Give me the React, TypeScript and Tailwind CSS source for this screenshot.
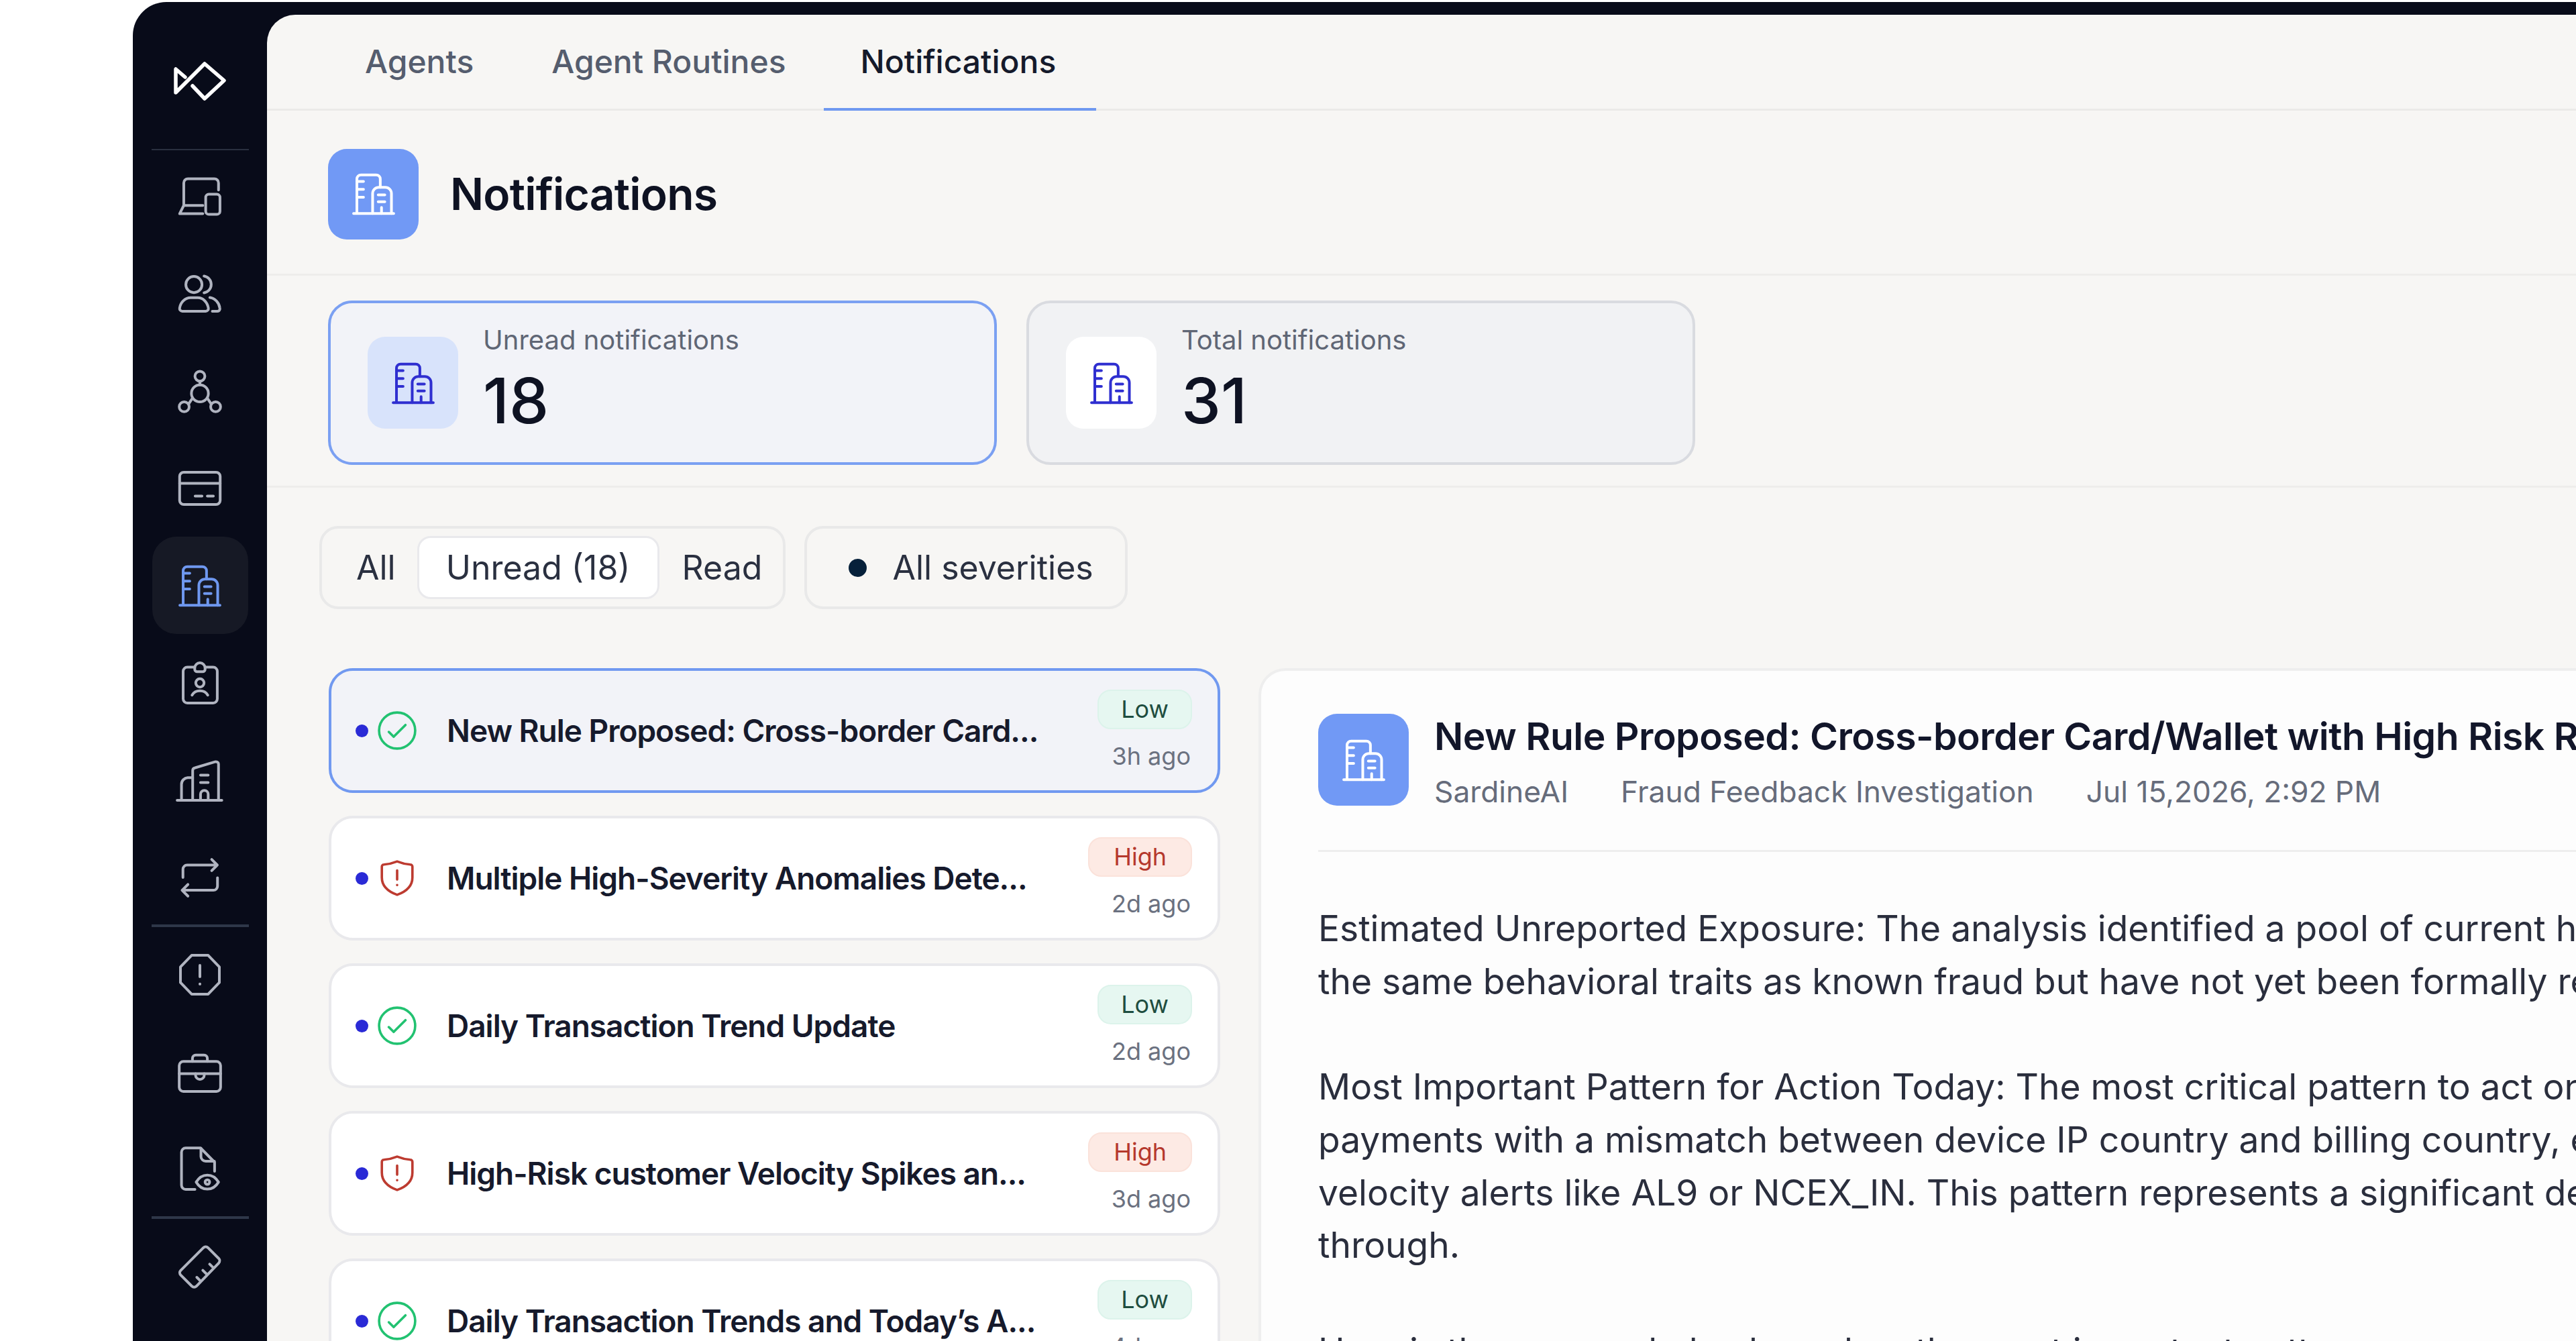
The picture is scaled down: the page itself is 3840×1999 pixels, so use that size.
import React from "react";

type IconProps = { className?: string };

const Svg = ({ className = "", children }: IconProps & { children: React.ReactNode }) => (
  <svg
    viewBox="0 0 24 24"
    fill="none"
    stroke="currentColor"
    strokeWidth={1.3}
    strokeLinecap="round"
    strokeLinejoin="round"
    className={`h-[74px] w-[74px] shrink-0 ${className}`}
  >
    {children}
  </svg>
);

const Logo = () => (
  <svg viewBox="40 30 82 62" fill="none" stroke="#fff" strokeWidth={5.5} strokeLinejoin="round" strokeLinecap="round" className="h-[62px] w-[82px]">
    <path d="M59 55 45 43v35l43-43 29 25-29 27-18-19" />
  </svg>
);

const LaptopIcon = (p: IconProps) => (
  <Svg {...p}>
    <path d="M21 8.8V5.4a2 2 0 0 0-2-2H6.2a2 2 0 0 0-2 2v10.9l-2 4h11.2M4.2 16.300h9.2" />
    <rect x="14.8" y="10.9" width="6.9" height="9.7" rx="1.5" />
  </Svg>
);

const UsersIcon = (p: IconProps) => (
  <Svg {...p}>
    <circle cx="9.1" cy="7.5" r="3.9" />
    <path d="M3.5 20.4h11.3a1.3 1.3 0 0 0 1.3-1.5c-.5-2.9-2.6-5-5.1-5H7.5c-2.6 0-4.9 2.1-5.3 5a1.3 1.3 0 0 0 1.3 1.5Z" />
    <path d="M14 3.4a4.1 4.1 0 0 1 0 8.1M16.8 13.8c2.6.4 4.5 2.5 4.8 5a1.2 1.2 0 0 1-1.2 1.6H18" />
  </Svg>
);

const NetworkIcon = (p: IconProps) => (
  <Svg {...p}>
    <circle cx="12" cy="13.1" r="4.1" />
    <circle cx="12" cy="4.8" r="2.4" />
    <circle cx="4.4" cy="19.6" r="2.4" />
    <circle cx="19.6" cy="19.6" r="2.4" />
    <path d="M12 7.2V9M6.5 18.3l2-3M15.500 15.3l2 3" />
  </Svg>
);

const CardIcon = (p: IconProps) => (
  <Svg {...p}>
    <rect x="2.2" y="4.2" width="19.6" height="15.6" rx="2" />
    <path d="M2.2 9.6h19.6M9.7 15.7H13M15.6 15.7h2.9" />
  </Svg>
);

const BuildingsIcon = (p: IconProps) => (
  <Svg {...p}>
    <path d="M2.3 21.5h19.4M3.9 21.5V4.8a2 2 0 0 1 2-2h7.3a2 2 0 0 1 2 2v4" />
    <path d="M11.5 21.5v-9.7a3 3 0 0 1 3-3h3.1a3 3 0 0 1 3 3v9.7" />
    <path d="M3.9 6h3.2M3.9 9.8h3.2M3.9 13.6h3.2M14.2 12.5h3.2M14.2 15.8h3.2M15.8 18.6v2.9" />
  </Svg>
);

const BadgeIcon = (p: IconProps) => (
  <Svg {...p}>
    <path d="M9.5 4.4H5.9a2 2 0 0 0-2 2v13.3a2 2 0 0 0 2 2h12.5a2 2 0 0 0 2-2V6.4a2 2 0 0 0-2-2h-3.9" />
    <path d="M9.5 4.8a2.5 2.5 0 0 1 5 0v.6a1.2 1.2 0 0 1-1.2 1.2h-2.6a1.2 1.2 0 0 1-1.2-1.2Z" />
    <circle cx="12" cy="12" r="2" />
    <path d="M8.2 17.9c.8-1.4 2.2-2.1 3.8-2.1s3 .7 3.8 2.1" />
  </Svg>
);

const OfficeIcon = (p: IconProps) => (
  <Svg {...p}>
    <path d="M1 21.7h21.6M8.5 21.7V7.4c0-.7.5-1.3 1.2-1.4l9.6-2.9c.7-.2 1.7.3 1.7 1v17.6" />
    <path d="M3.1 21.7V14c0-1.8 1.4-3.1 3-3.2h2.4M12.3 21.7v-2.9a1.85 1.85 0 0 1 3.7 0v2.900M12.3 9.6H16M12.3 13.1H16" />
  </Svg>
);

const SwapIcon = (p: IconProps) => (
  <Svg {...p}>
    <path d="M3.8 12V8a2 2 0 0 1 2-2h14.6M17.7 3.3 20.4 6l-2.7 2.7M20.5 12.2v4a2 2 0 0 1-2 2H3.4M6.2 15.4l-2.8 2.8L6.2 21" />
  </Svg>
);

const OctagonIcon = (p: IconProps) => (
  <Svg {...p}>
    <path d="M8 2.6h8L21.400 8.200v7.600L16 21.400H8L2.600 15.800V8.200Z" />
    <path d="M12 7.5V13M12 16.5h.01" />
  </Svg>
);

const BriefcaseIcon = (p: IconProps) => (
  <Svg {...p}>
    <rect x="2" y="6.9" width="20" height="14.5" rx="2" />
    <path d="M8.4 6.9V5.4a1.6 1.6 0 0 1 1.6-1.6h4a1.6 1.6 0 0 1 1.6 1.6v1.5M2 12.8h7.9M14.1 12.8H22" />
    <path d="M9.9 12.8v.7a2.1 2.1 0 0 0 4.2 0v-.7Z" />
  </Svg>
);

const FileEyeIcon = (p: IconProps) => (
  <Svg {...p}>
    <path d="M9.6 21.7H5.1a2 2 0 0 1-2-2v-16a2 2 0 0 1 2-2h7.2l6.8 6.9V13" />
    <path d="M12.5 1.9v3.9a2.3 2.3 0 0 0 2.3 2.3H19" />
    <path d="M10.2 18.2c1.3-2.2 3.3-3.4 5.4-3.4s4.1 1.2 5.4 3.4c-1.3 2.2-3.3 3.4-5.4 3.4s-4.1-1.2-5.4-3.4Z" />
    <circle cx="15.6" cy="18.2" r="1.1" />
  </Svg>
);

const RulerIcon = (p: IconProps) => (
  <Svg {...p}>
    <path d="M13.7 2.9a1.6 1.6 0 0 1 2.2 0l5.2 5.2a1.6 1.6 0 0 1 0 2.2L10.3 21.5a1.6 1.6 0 0 1-2.2 0l-5.4-5.4a1.6 1.6 0 0 1 0-2.2Z" />
    <path d="m18.5 12.600-1.8-1.8M15.400 15.800l-2-2M12.300 19l-1.800-1.800" />
  </Svg>
);

const CheckCircle = () => (
  <svg viewBox="0 0 56 56" fill="none" stroke="#22c271" strokeWidth={3.5} strokeLinecap="round" strokeLinejoin="round" className="h-[58px] w-[58px] shrink-0">
    <circle cx="28" cy="28" r="26" />
    <path d="m16 30 7 7 17-17" />
  </svg>
);

const ShieldAlert = () => (
  <svg viewBox="0 0 56 56" fill="none" stroke="#bd3b30" strokeWidth={3.5} strokeLinecap="round" strokeLinejoin="round" className="h-[58px] w-[58px] shrink-0">
    <path d="M28 4c5 2 12 4 19 4.5a3 3 0 0 1 3 3V27c0 12-8 20-22 25C14 47 6 39 6 27V11.500a3 3 0 0 1 3-3C16 8 23 6 28 4Z" />
    <path d="M28 17v13M28 38h.01" />
  </svg>
);

const Divider = () => <div className="relative -my-[2px] h-[4px] w-[145px] bg-[#2e3749]" />;

const NavItem = ({ icon: Icon, active }: { icon: (p: IconProps) => React.ReactNode; active?: boolean }) => (
  <div className={`flex h-[145px] w-[143px] items-center justify-center rounded-[36px] ${active ? "bg-[#161925] text-[#6f98f0]" : "text-[#b0b4c0]"}`}>
    <Icon />
  </div>
);

const Sidebar = () => (
  <aside className="flex w-[200px] shrink-0 flex-col items-center">
    <div className="flex h-[217px] w-full flex-col items-center pt-[87px]">
      <Logo />
    </div>
    <div className="relative mt-[2px] -mb-[4px] h-[2px] w-[145px] bg-[#2a3040]" />
    <NavItem icon={LaptopIcon} />
    <NavItem icon={UsersIcon} />
    <NavItem icon={NetworkIcon} />
    <NavItem icon={CardIcon} />
    <NavItem icon={BuildingsIcon} active />
    <NavItem icon={BadgeIcon} />
    <NavItem icon={OfficeIcon} />
    <NavItem icon={SwapIcon} />
    <Divider />
    <NavItem icon={OctagonIcon} />
    <NavItem icon={BriefcaseIcon} />
    <NavItem icon={FileEyeIcon} />
    <Divider />
    <NavItem icon={RulerIcon} />
  </aside>
);

const Tabs = () => (
  <div className="flex h-[143px] shrink-0 border-b-[3px] border-[#ebeae8] pl-[88px] text-[48px] font-[450]">
    <div className="flex items-center px-[58px] text-[#555d6e]">Agents</div>
    <div className="flex items-center pr-[56px] pl-[58px] text-[#555d6e]">Agent Routines</div>
    <div className="-mb-[3px] flex items-center border-b-[4px] border-[#6f98f0] pr-[60px] pl-[55px] text-[#151a2b]">Notifications</div>
  </div>
);

const StatCard = ({ label, value, active }: { label: string; value: string; active?: boolean }) => (
  <div className={`flex h-[245px] w-[997px] items-center gap-[37px] rounded-[36px] border-[4px] pl-[55px] ${active ? "border-[#7ba0f2] bg-[#f2f3f8]" : "border-[#d9dbe0] bg-[#f1f2f4]"}`}>
    <div className={`flex h-[137px] w-[135px] items-center justify-center rounded-[26px] text-[#2f2fd0] ${active ? "bg-[#d8e3fb]" : "bg-white"}`}>
      <BuildingsIcon />
    </div>
    <div className="mb-[11px] flex flex-col">
      <span className="text-[40px] leading-[50px] text-[#5f6675]">{label}</span>
      <span className="mt-[13px] text-[94px] leading-[104px] font-medium text-[#0e1222]">{value}</span>
    </div>
  </div>
);

type Notice = { title: string; level: "Low" | "High"; time: string; active?: boolean };

const notices: Notice[] = [
  { title: "New Rule Proposed: Cross-border Card...", level: "Low", time: "3h ago", active: true },
  { title: "Multiple High-Severity Anomalies Dete...", level: "High", time: "2d ago" },
  { title: "Daily Transaction Trend Update", level: "Low", time: "2d ago" },
  { title: "High-Risk customer Velocity Spikes an...", level: "High", time: "3d ago" },
  { title: "Daily Transaction Trends and Today\u2019s A...", level: "Low", time: "4d ago" },
];

const Row = ({ n }: { n: Notice }) => (
  <div className={`flex h-[186px] shrink-0 items-center rounded-[36px] border-[4px] pr-[38px] pl-[36px] ${n.active ? "border-[#7199f0] bg-[#f2f3f8]" : "border-[#e9e9ec] bg-white"}`}>
    <span className="h-[19px] w-[19px] shrink-0 rounded-full bg-[#2a2ad6]" />
    <span className="ml-[14px]">{n.level === "Low" ? <CheckCircle /> : <ShieldAlert />}</span>
    <span className="ml-[45px] text-[46px] font-semibold tracking-[-0.022em] whitespace-nowrap text-[#161a2c]">{n.title}</span>
    <div className="ml-auto flex flex-col items-end gap-[16px]">
      <span className={`flex h-[59px] items-center rounded-[20px] border-[2px] text-[36px] ${n.level === "Low" ? "border-[#dcf3eb] bg-[#e6f7f1] px-[33px] text-[#1e4d3f]" : "border-[#fbe2da] bg-[#fdeae4] px-[36px] text-[#b5382c]"}`}>
        {n.level}
      </span>
      <span className="pr-[2px] text-[36px] leading-[48px] text-[#6b7180]">{n.time}</span>
    </div>
  </div>
);

const bodyLines = [
  ["Estimated Unreported Exposure: The analysis identified a pool of current high-risk", "the same behavioral traits as known fraud but have not yet been formally reported."],
  [
    "Most Important Pattern for Action Today: The most critical pattern to act on is",
    "payments with a mismatch between device IP country and billing country, especially",
    "velocity alerts like AL9 or NCEX_IN. This pattern represents a significant detection",
    "through.",
  ],
  ["Here is the personal plan based on the most important pattern"],
];

const Detail = () => (
  <div className="min-w-0 flex-1 overflow-hidden rounded-tl-[40px] border-t-[4px] border-l-[4px] border-[#eeeeee] bg-[#fdfdfd] pt-[64px] pl-[85px]">
    <div className="flex items-start gap-[38px] border-b-[3px] border-[#eeeeee] pb-[59px]">
      <div className="flex h-[137px] w-[135px] shrink-0 items-center justify-center rounded-[28px] bg-[#7199f5] text-white">
        <BuildingsIcon />
      </div>
      <div className="flex flex-col whitespace-nowrap">
        <span className="text-[57px] leading-[68px] font-semibold tracking-[-0.009em] text-[#12162a]">
          New Rule Proposed: Cross-border Card/Wallet with High Risk Rates
        </span>
        <div className="mt-[20px] flex gap-[78px] text-[44.3px] leading-[56px] text-[#666c7b]">
          <span>SardineAI</span>
          <span>Fraud Feedback Investigation</span>
          <span>Jul 15,2026, 2:92 PM</span>
        </div>
      </div>
    </div>
    <div className="mt-[75px] flex flex-col gap-[78.7px] text-[53.3px] leading-[78.7px] whitespace-nowrap text-[#2a2e3d]">
      {bodyLines.map((para) => (
        <div key={para[0]}>
          {para.map((line) => (
            <div key={line}>{line}</div>
          ))}
        </div>
      ))}
    </div>
  </div>
);

export default function App() {
  return (
    <div className="flex h-[1999px] w-[3840px] overflow-hidden bg-white pt-[3px] pl-[198px] [font-family:Inter,sans-serif]">
      <div className="flex min-w-0 flex-1 rounded-tl-[50px] bg-[#080b19]">
        <Sidebar />
        <main className="mt-[19px] flex min-w-0 flex-1 flex-col overflow-hidden rounded-tl-[42px] bg-[#f7f6f4]">
          <Tabs />
          <div className="flex h-[246px] shrink-0 items-center gap-[47px] border-b-[3px] border-[#eeedeb] pt-[5px] pl-[91px]">
            <div className="flex h-[135px] w-[135px] items-center justify-center rounded-[28px] bg-[#7199f5] text-white">
              <BuildingsIcon />
            </div>
            <h1 className="text-[66px] font-semibold tracking-[-0.012em] text-[#0e1222]">Notifications</h1>
          </div>
          <div className="flex h-[316px] shrink-0 items-start gap-[44px] border-b-[3px] border-[#eeedeb] pt-[37px] pl-[91px]">
            <StatCard label="Unread notifications" value="18" active />
            <StatCard label="Total notifications" value="31" />
          </div>
          <div className="flex shrink-0 gap-[28px] pt-[57px] pl-[78px]">
            <div className="flex h-[124px] items-center rounded-[28px] border-[4px] border-[#e9e9e9] pr-[31px] pl-[51px] text-[50px] text-[#2a3040]">
              <span>All</span>
              <span className="ml-[32px] flex h-[94px] items-center rounded-[20px] border-[3px] border-[#e9e9ec] bg-white px-[40px]">Unread (18)</span>
              <span className="ml-[34px]">Read</span>
            </div>
            <div className="flex h-[124px] items-center gap-[38px] rounded-[28px] border-[4px] border-[#e9e9e9] pr-[47px] pl-[62px] text-[50px] text-[#2a3040]">
              <span className="h-[27px] w-[27px] rounded-full bg-[#06203a]" />
              <span>All severities</span>
            </div>
          </div>
          <div className="mt-[88px] flex min-h-0 flex-1 gap-[57px] pl-[92px]">
            <div className="flex w-[1329px] shrink-0 flex-col gap-[34px]">
              {notices.map((n) => (
                <Row key={n.title} n={n} />
              ))}
            </div>
            <Detail />
          </div>
        </main>
      </div>
    </div>
  );
}
